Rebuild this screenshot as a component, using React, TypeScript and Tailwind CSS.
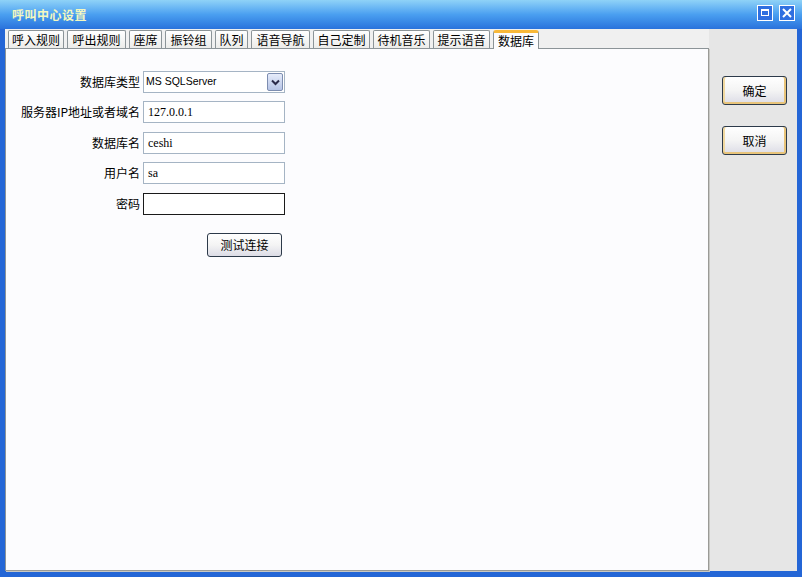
import React from "react";

const TABS = [
  { label: "呼入规则", w: "w-[56px]" },
  { label: "呼出规则", w: "w-[59px]" },
  { label: "座席", w: "w-[33px]" },
  { label: "振铃组", w: "w-[47px]" },
  { label: "队列", w: "w-[33px]" },
  { label: "语音导航", w: "w-[59px]" },
  { label: "自己定制", w: "w-[57px]" },
  { label: "待机音乐", w: "w-[57px]" },
  { label: "提示语音", w: "w-[57px]" },
];

const cjk = "font-['SimSun','Noto_Sans_CJK_SC',sans-serif]";

const Field = ({ label, value, dark, className = "" }: { label: string; value?: string; dark?: boolean; className?: string }) => (
  <div className={`flex items-center h-[22px] ${className}`}>
    <div className="w-[137px] pr-[3px] text-right text-[12px] text-black">{label}</div>
    <div
      className={`w-[142px] h-[22px] bg-white flex items-center px-[4px] text-[12px] font-['Liberation_Serif',serif] text-black border ${
        dark ? "border-[#1a1a1a]" : "border-[#a5b4c4]"
      }`}
    >
      {value}
    </div>
  </div>
);

const XpButton = ({ children, className = "" }: { children: React.ReactNode; className?: string }) => (
  <button
    className={`rounded-[3px] border border-[#2d3a4a] bg-gradient-to-b from-white via-[#f4f4f4] to-[#dcdce6] text-[12px] text-black flex items-center justify-center ${className}`}
  >
    {children}
  </button>
);

export default function App() {
  return (
    <div className={`w-[802px] h-[577px] flex flex-col bg-[#2466d6] ${cjk}`}>
      {/* title bar */}
      <div className="h-[29px] flex items-center justify-between pl-[12px] pr-[7px] bg-gradient-to-b from-[#8fd2f7] via-[#4a9ff0] to-[#2a72dc]">
        <span className="text-[12px] font-bold text-[#f4f8c0] tracking-[0.5px]">呼叫中心设置</span>
        <div className="flex gap-[6px] mb-[4px]">
          <div className="w-[16px] h-[16px] border border-white bg-[#2f6fe0] flex items-center justify-center">
            <div className="w-[8px] h-[7px] border border-white border-t-2" />
          </div>
          <div className="w-[16px] h-[16px] border border-white bg-[#2f6fe0] flex items-center justify-center">
            <svg width="10" height="10" viewBox="0 0 10 10">
              <path d="M1 1 L9 9 M9 1 L1 9" stroke="white" strokeWidth="2" />
            </svg>
          </div>
        </div>
      </div>

      {/* body */}
      <div className="flex-1 flex mx-[5px] mb-[6px] bg-[#e6e6e6]">
        <div className="w-[704px] flex flex-col">
          <div className="h-[19px] flex items-end gap-[3px] pl-[3px] bg-[#f0f0f0]">
            {TABS.map((t) => (
              <div
                key={t.label}
                className={`${t.w} h-[18px] border border-b-0 border-[#8c9498] rounded-t-[2px] bg-gradient-to-b from-white to-[#ececea] flex items-center justify-center text-[12px] text-black`}
              >
                {t.label}
              </div>
            ))}
            <div className="w-[46px] h-[19px] border-x border-[#8c9498] border-t-[3px] border-t-[#f8b838] rounded-t-[3px] bg-[#fcfcfe] flex items-center justify-center text-[12px] text-black -mb-[1px] relative">
              数据库
            </div>
          </div>
          <div className="flex-1 bg-[#fcfcfe] border border-[#8c9498] border-r-[#9a9a96] border-b-[#9a9a96] shadow-[1px_1px_0_#c8c8c4] pt-[22px] flex flex-col">
            <div className="flex items-center h-[22px]">
              <div className="w-[137px] pr-[3px] text-right text-[12px] text-black">数据库类型</div>
              <div className="w-[142px] h-[22px] bg-white border border-[#a5b4c4] flex items-center justify-between pl-[2px] pr-[1px]">
                <span className="text-[10.5px] font-['Liberation_Sans',sans-serif] text-black">MS SQLServer</span>
                <div className="w-[16px] h-[18px] rounded-[2px] border border-[#7d8db0] bg-gradient-to-b from-[#e6ecfa] to-[#b6c4e6] flex items-center justify-center">
                  <svg width="9" height="7" viewBox="0 0 9 7">
                    <path d="M1 1.5 L4.5 5 L8 1.5" stroke="#2a2a4a" strokeWidth="2" fill="none" />
                  </svg>
                </div>
              </div>
            </div>
            <Field label="服务器IP地址或者域名" value="127.0.0.1" className="mt-[8px]" />
            <Field label="数据库名" value="ceshi" className="mt-[9px]" />
            <Field label="用户名" value="sa" className="mt-[8px]" />
            <Field label="密码" dark className="mt-[9px]" />
            <div className="pl-[201px] pt-[18px]">
              <XpButton className="w-[75px] h-[24px]">测试连接</XpButton>
            </div>
          </div>
        </div>
        <div className="flex-1 flex flex-col pl-[13px] pt-[47px] gap-[21px]">
          <XpButton className="w-[65px] h-[29px] shadow-[inset_0_-2px_0_#e8c47a,inset_2px_0_0_#f0d8a0,inset_-2px_0_0_#e8c47a]">确定</XpButton>
          <XpButton className="w-[65px] h-[29px] shadow-[inset_0_-2px_0_#e8c47a,inset_2px_0_0_#f0d8a0,inset_-2px_0_0_#e8c47a]">取消</XpButton>
        </div>
      </div>
    </div>
  );
}
